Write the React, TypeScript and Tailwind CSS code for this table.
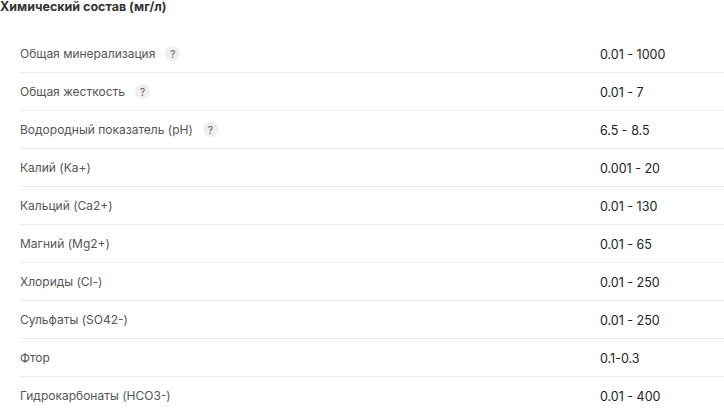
const ROWS: { label: string; value: string; hint?: boolean }[] = [
  { label: "Общая минерализация", value: "0.01 - 1000", hint: true },
  { label: "Общая жесткость", value: "0.01 - 7", hint: true },
  { label: "Водородный показатель (pH)", value: "6.5 - 8.5", hint: true },
  { label: "Калий (Ka+)", value: "0.001 - 20" },
  { label: "Кальций (Ca2+)", value: "0.01 - 130" },
  { label: "Магний (Mg2+)", value: "0.01 - 65" },
  { label: "Хлориды (Cl-)", value: "0.01 - 250" },
  { label: "Сульфаты (SO42-)", value: "0.01 - 250" },
  { label: "Фтор", value: "0.1-0.3" },
  { label: "Гидрокарбонаты (HCO3-)", value: "0.01 - 400" },
];

export default function App() {
  return (
    <div className="w-[724px] h-[413px] overflow-hidden bg-white font-['Inter',sans-serif]">
      <h2 className="h-[35px] text-[12.5px] leading-[14px] font-bold text-[#333]">
        Химический состав (мг/л)
      </h2>
      <div className="pl-5">
        {ROWS.map((row) => (
          <div
            key={row.label}
            className="flex items-center h-[38px] border-b border-[#ebebeb] text-[12px] leading-[16px]"
          >
            <div className="w-[580px] flex items-center gap-[10px] text-[#555]">
              <span>{row.label}</span>
              {row.hint && (
                <span className="w-[15px] h-[15px] rounded-full bg-[#efefef] text-[10px] leading-none text-[#555] flex items-center justify-center">
                  ?
                </span>
              )}
            </div>
            <div className="text-[#222] text-[12.5px] pt-[2px]">{row.value}</div>
          </div>
        ))}
      </div>
    </div>
  );
}
